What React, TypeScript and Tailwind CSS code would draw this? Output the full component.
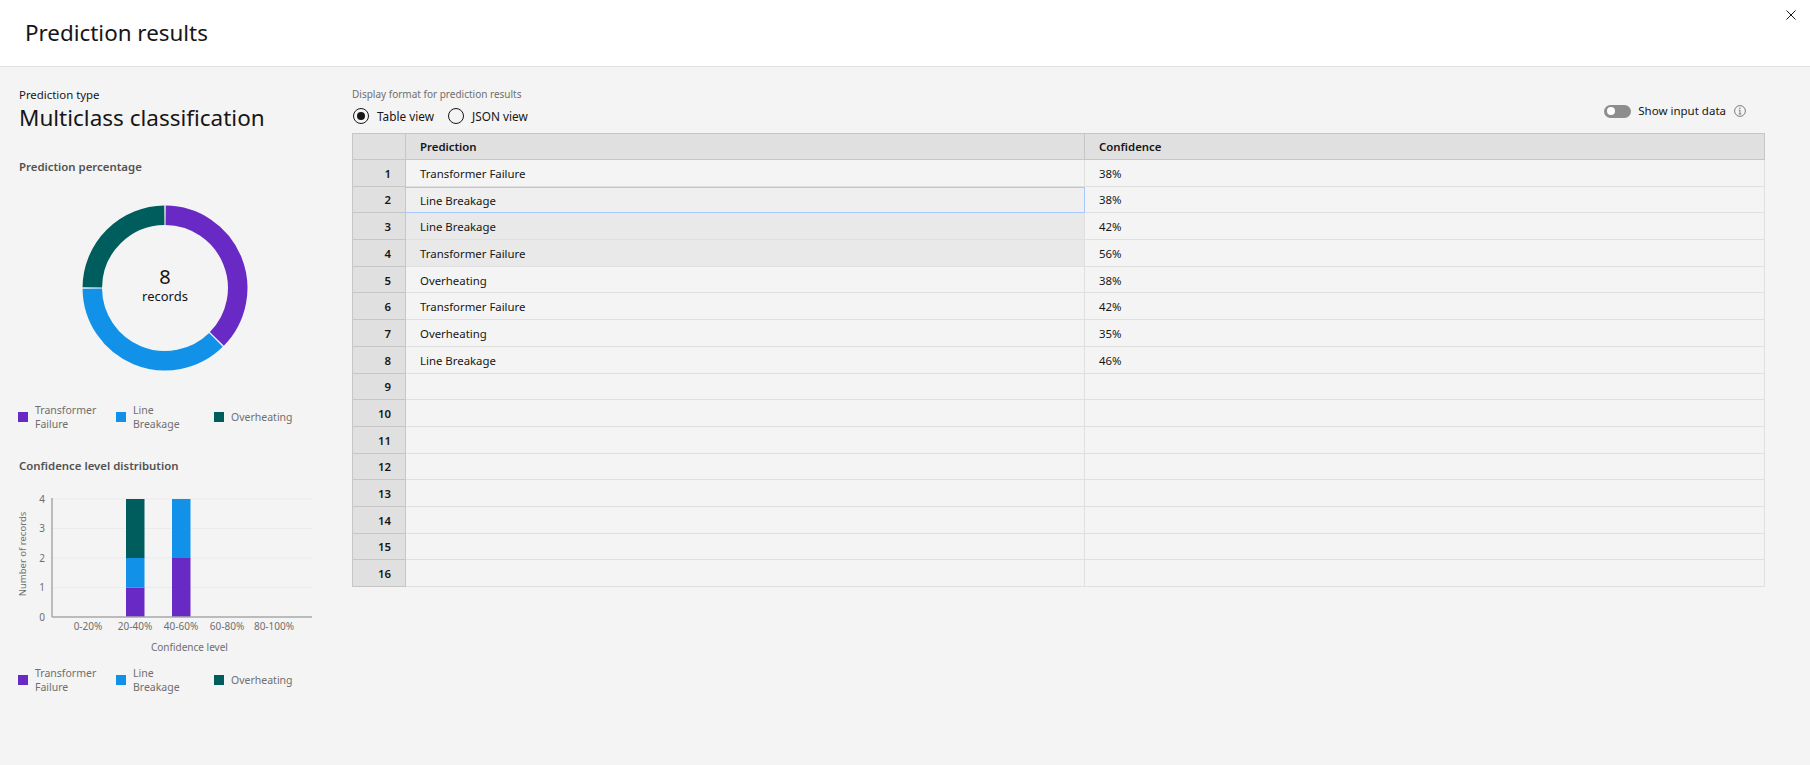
import React from "react";

const font = { fontFamily: '"Noto Sans", sans-serif' };

const rows: [string, string][] = [
  ["Transformer Failure", "38%"],
  ["Line Breakage", "38%"],
  ["Line Breakage", "42%"],
  ["Transformer Failure", "56%"],
  ["Overheating", "38%"],
  ["Transformer Failure", "42%"],
  ["Overheating", "35%"],
  ["Line Breakage", "46%"],
  ["", ""],
  ["", ""],
  ["", ""],
  ["", ""],
  ["", ""],
  ["", ""],
  ["", ""],
  ["", ""],
];

function Legend() {
  const items: [string, string, string, string][] = [
    ["bg-[#6929c4]", "Transformer", "Failure", "w-[98px]"],
    ["bg-[#1192e8]", "Line", "Breakage", "w-[98px]"],
    ["bg-[#005d5d]", "Overheating", "", "w-[90px]"],
  ];
  return (
    <div className="flex ml-[-1px]">
      {items.map(([c, a, b, w]) => (
        <div key={a} className={`flex items-center ${w}`}>
          <div className={`w-[10px] h-[10px] mr-[7px] shrink-0 ${c}`} />
          <div className="text-[10.5px] leading-[14px] text-[#6f6f6f]">
            <div>{a}</div>
            {b && <div>{b}</div>}
          </div>
        </div>
      ))}
    </div>
  );
}

function arc(a0: number, a1: number, r: number, cx: number, cy: number) {
  const p = (a: number) => {
    const t = ((a - 90) * Math.PI) / 180;
    return `${cx + r * Math.cos(t)} ${cy + r * Math.sin(t)}`;
  };
  return `M${p(a0)} A${r} ${r} 0 0 1 ${p(a1)}`;
}

function Donut() {
  return (
    <div className="relative w-[170px] h-[170px] ml-[61px] mt-[28px]">
      <svg width="170" height="170" viewBox="0 0 170 170">
        <path d={arc(0.5, 134.5, 72.7, 85, 85)} fill="none" stroke="#6929c4" strokeWidth="19.5" />
        <path d={arc(135.5, 269.5, 72.7, 85, 85)} fill="none" stroke="#1192e8" strokeWidth="19.5" />
        <path d={arc(270.5, 359.5, 72.7, 85, 85)} fill="none" stroke="#005d5d" strokeWidth="19.5" />
      </svg>
      <div className="absolute inset-0 flex flex-col items-center justify-center pb-[7px] text-[#161616]">
        <div className="text-[20px] leading-[24px]">8</div>
        <div className="text-[13px] leading-[16px] mt-[-1px]">records</div>
      </div>
    </div>
  );
}

function Bars() {
  const H = 118;
  const y = (v: number) => 4 + H - (v / 4) * H;
  const cats: [string, number][] = [
    ["0-20%", 88],
    ["20-40%", 135],
    ["40-60%", 181],
    ["60-80%", 227],
    ["80-100%", 274],
  ];
  return (
    <svg width="320" height="146" viewBox="0 0 320 146" className="block">
      {[1, 2, 3, 4].map((v) => (
        <line key={v} x1="52" x2="312" y1={y(v)} y2={y(v)} stroke="#ebebeb" strokeWidth="1" />
      ))}
      <rect x="126" y={y(1)} width="18.5" height={H / 4} fill="#6929c4" />
      <rect x="126" y={y(2)} width="18.5" height={H / 4} fill="#1192e8" />
      <rect x="126" y={y(4)} width="18.5" height={H / 2} fill="#005d5d" />
      <rect x="172" y={y(2)} width="18.5" height={H / 2} fill="#6929c4" />
      <rect x="172" y={y(4)} width="18.5" height={H / 2} fill="#1192e8" />
      <line x1="52" x2="52" y1="3" y2={y(0)} stroke="#a8a8a8" strokeWidth="1.5" />
      <line x1="52" x2="312" y1={y(0)} y2={y(0)} stroke="#a8a8a8" strokeWidth="1.5" />
      {[0, 1, 2, 3, 4].map((v) => (
        <text key={v} x="45" y={y(v) + 3.5} textAnchor="end" fontSize="10" fill="#6f6f6f">
          {v}
        </text>
      ))}
      {cats.map(([t, x]) => (
        <text key={t} x={x} y="135" textAnchor="middle" fontSize="10" fill="#6f6f6f">
          {t}
        </text>
      ))}
      <text transform="translate(26 59) rotate(-90)" textAnchor="middle" fontSize="9.5" fill="#6f6f6f">
        Number of records
      </text>
    </svg>
  );
}

function Radio({ on, label }: { on?: boolean; label: string }) {
  return (
    <div className="flex items-center">
      <div className="w-[16px] h-[16px] rounded-full border border-[#161616] flex items-center justify-center mr-[8px]">
        {on && <div className="w-[8px] h-[8px] rounded-full bg-[#161616]" />}
      </div>
      <span className="text-[11.8px] leading-[16px] text-[#161616]">{label}</span>
    </div>
  );
}

export default function App() {
  return (
    <div style={font} className="w-[1810px] h-[765px] bg-[#f4f4f4] overflow-hidden flex flex-col text-[#161616]">
      <header className="relative h-[67px] shrink-0 bg-white border-b border-[#e0e0e0] pl-[25px] flex items-center">
        <h1 className="text-[22.4px] leading-[28px] mt-[-1px]">Prediction results</h1>
        <svg className="absolute right-[13px] top-[9px]" width="12" height="12" viewBox="0 0 12 12">
          <path d="M1.5 1.5 L10.5 10.5 M10.5 1.5 L1.5 10.5" stroke="#161616" strokeWidth="1" fill="none" />
        </svg>
      </header>
      <main className="flex flex-1">
        <aside className="w-[352px] shrink-0 pl-[19px] pt-[20px]">
          <div className="text-[11.4px] leading-[16px]">Prediction type</div>
          <div className="text-[22.5px] leading-[28px] mt-[1px]">Multiclass classification</div>
          <div className="text-[11.4px] leading-[16px] font-semibold text-[#525252] mt-[27px]">Prediction percentage</div>
          <Donut />
          <div className="mt-[30px]"><Legend /></div>
          <div className="text-[11.4px] leading-[16px] font-semibold text-[#525252] mt-[27px]">Confidence level distribution</div>
          <div className="ml-[-19px] mt-[21px]">
            <Bars />
            <div className="text-[10px] leading-[14px] text-[#6f6f6f] pl-[151px] mt-[-1px]">Confidence level</div>
          </div>
          <div className="mt-[12px]"><Legend /></div>
        </aside>
        <section className="flex-1 pr-[45px] pt-[20px]">
          <div className="text-[10px] leading-[14px] text-[#6f6f6f]">Display format for prediction results</div>
          <div className="flex items-center justify-between mt-[3px] h-[24px]">
            <div className="flex gap-[14px] pl-[1px]">
              <Radio on label="Table view" />
              <Radio label="JSON view" />
            </div>
            <div className="flex items-center mr-[19px] mt-[-10px]">
              <div className="relative w-[27px] h-[13px] rounded-full bg-[#8d8d8d] mr-[7px]">
                <div className="absolute left-[3px] top-[2.5px] w-[8px] h-[8px] rounded-full bg-white" />
              </div>
              <span className="text-[11.5px] leading-[16px]">Show input data</span>
              <svg className="ml-[8px]" width="12" height="12" viewBox="0 0 12 12" fill="none" stroke="#6f6f6f">
                <circle cx="6" cy="6" r="5.4" strokeWidth="0.9" />
                <path d="M6 5.2 V9 M4.6 9 H7.4 M4.8 5.2 H6" strokeWidth="0.9" />
                <circle cx="5.9" cy="3.3" r="0.7" fill="#6f6f6f" stroke="none" />
              </svg>
            </div>
          </div>
          <div className="mt-[5px] text-[11.4px]">
            <div className="flex h-[27px] bg-[#e0e0e0] border-y border-x border-[#c6c6c6] font-semibold">
              <div className="w-[53px] shrink-0 border-r border-[#c6c6c6]" />
              <div className="w-[679px] shrink-0 border-r border-[#c6c6c6] pl-[14px] flex items-center">Prediction</div>
              <div className="flex-1 pl-[14px] flex items-center">Confidence</div>
            </div>
            {rows.map(([p, c], i) => (
              <div key={i} className="flex h-[26.7px]">
                <div className="w-[54px] shrink-0 bg-[#e0e0e0] border-x border-b border-[#c6c6c6] flex items-center justify-end pr-[14px] pt-[1px] font-semibold">
                  {i + 1}
                </div>
                <div
                  className={`w-[679px] shrink-0 pl-[14px] pt-[1px] flex items-center border-r border-b ${
                    i === 1
                      ? "bg-[#efefef] border-[#a6c8ff] border-t"
                      : i === 2 || i === 3
                        ? "bg-[#e9e9e9] border-[#e0e0e0]"
                        : "border-[#e0e0e0]"
                  }`}
                >
                  {p}
                </div>
                <div className="flex-1 pl-[14px] pt-[1px] flex items-center border-r border-b border-[#e0e0e0]">{c}</div>
              </div>
            ))}
          </div>
        </section>
      </main>
    </div>
  );
}
